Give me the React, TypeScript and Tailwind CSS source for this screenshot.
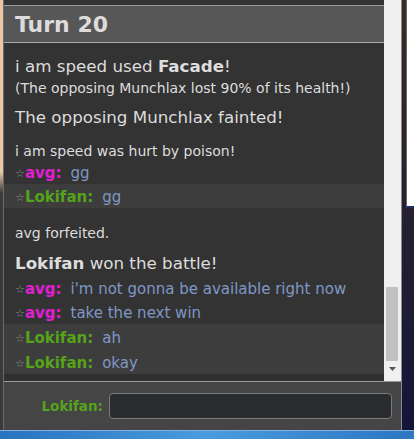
import React from 'react';

type ChatLine = { name: string; color: string; text: string };

const FONT = { fontFamily: '"DejaVu Sans", Verdana, sans-serif' };

function ChatRow({ line, h = 'h-[24px]' }: { line: ChatLine; h?: string }) {
  return (
    <div className={`flex items-center pl-[11px] pt-[3px] ${h}`}>
      <span className="text-[11px] leading-none text-[#8a8a8a]">☆</span>
      <span className={`text-[15px] font-bold ${line.color}`}>{line.name}:</span>
      <span className="ml-[9px] text-[15px] text-[#7f98c6]">{line.text}</span>
    </div>
  );
}

export default function App() {
  const magenta = 'text-[#e01fd0]';
  const green = 'text-[#55a31a]';

  return (
    <div className="flex h-[439px] w-[414px] flex-col overflow-hidden bg-[#333]" style={FONT}>
      <div className="flex h-[430px]">
        {/* left strip: page background */}
        <div className="w-[3px] bg-gradient-to-b from-[#e9c8a6] from-40% to-[#3a3a3a] to-45%" />

        {/* battle log panel */}
        <div className="flex w-[399px] flex-col border-x border-l-[#6a6a6a] border-r-[#8a8a8a]">
          <div className="flex h-[381px]">
            {/* chat column */}
            <div className="flex w-[380px] flex-col bg-[#333] text-[#ddd]">
              <div className="h-[6px] border-b border-[#9c9c9c] bg-[#333]" />
              <div className="flex h-[37px] items-center border-b border-[#a9a9a9] bg-[#575757] pl-[11px]">
                <span className="text-[22px] font-bold text-[#dcdcdc]">Turn 20</span>
              </div>

              <div className="pt-[14px]">
                <div className="flex h-[20px] items-center pl-[11px] text-[16.7px]">
                  i am speed used&nbsp;<b>Facade</b>!
                </div>
                <div className="mt-[2px] flex h-[18px] items-center pl-[11px] text-[14px]">
                  (The opposing Munchlax lost 90% of its health!)
                </div>
                <div className="mt-[11px] flex h-[20px] items-center pl-[11px] text-[16.7px]">
                  The opposing Munchlax fainted!
                </div>
                <div className="mt-[14px] flex h-[18px] items-center pl-[11px] text-[14px]">
                  i am speed was hurt by poison!
                </div>
              </div>

              <ChatRow line={{ name: 'avg', color: magenta, text: 'gg' }} />
              <div className="bg-[#3d3d3d]">
                <ChatRow line={{ name: 'Lokifan', color: green, text: 'gg' }} />
              </div>

              <div className="mt-[16px] flex h-[18px] items-center pl-[11px] text-[14px]">
                avg forfeited.
              </div>
              <div className="mt-[12px] flex h-[20px] items-center pl-[11px] text-[16.7px]">
                <b>Lokifan</b>&nbsp;won the battle!
              </div>

              <div className="mt-[2px]">
                <ChatRow line={{ name: 'avg', color: magenta, text: "i'm not gonna be available right now" }} />
                <ChatRow line={{ name: 'avg', color: magenta, text: 'take the next win' }} />
              </div>
              <div className="bg-[#3d3d3d]">
                <ChatRow line={{ name: 'Lokifan', color: green, text: 'ah' }} h="h-[25px]" />
                <ChatRow line={{ name: 'Lokifan', color: green, text: 'okay' }} h="h-[25px]" />
              </div>
              <div className="flex-1 bg-[#2f2f2f]" />
            </div>

            {/* scrollbar */}
            <div className="flex w-[17px] flex-col bg-[#f0f0f0]">
              <div className="h-[287px]" />
              <div className="ml-[2px] h-[74px] w-[12px] bg-[#c1c1c1]" />
              <div className="flex flex-1 items-center justify-center pb-[3px]">
                <svg width="8" height="5" viewBox="0 0 8 5">
                  <path d="M0 0h7L3.5 4z" fill="#555" />
                </svg>
              </div>
            </div>
          </div>

          {/* chat input */}
          <div className="flex flex-1 items-center border-t border-[#9a9a9a] bg-[#454545]">
            <div className="w-[99px] text-right text-[13.5px] font-bold text-[#55a31a]">Lokifan:</div>
            <div className="ml-[6px] h-[26px] w-[283px] rounded-[4px] border border-[#7a7a7a] bg-[#2a2d2f]" />
          </div>
        </div>

        {/* desktop behind the window */}
        <div className="flex w-[12px] bg-gradient-to-b from-[#3a2a22] to-[#14143a]">
          <div className="w-[4px]" />
          <div className="h-[208px] w-[8px] border-b-2 border-l border-b-[#1c2a6a] border-l-[#666] bg-white" />
        </div>
      </div>

      {/* taskbar */}
      <div className="h-[9px] border-t border-[#7fb3e0] bg-gradient-to-r from-[#2a73bd] via-[#4a9be0] to-[#2d76c0]" />
    </div>
  );
}
